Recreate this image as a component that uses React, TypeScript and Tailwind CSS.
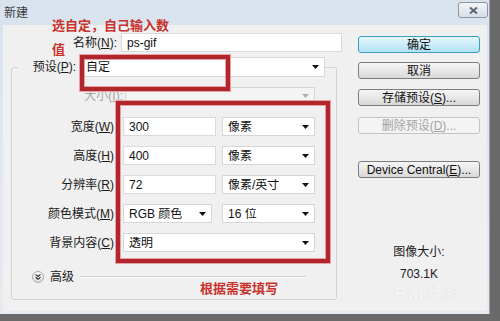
import React from 'react';

const font = { fontFamily: '"Liberation Sans", "Noto Sans CJK SC", sans-serif' };

const Arrow = () => (
  <svg width="7" height="4" viewBox="0 0 7 4" className="shrink-0">
    <path d="M0 0h7L3.5 4z" fill="#111" />
  </svg>
);

type SelectProps = { value?: string; className: string; disabled?: boolean };

const Select = ({ value = '', className, disabled }: SelectProps) => (
  <div
    className={`flex items-center justify-between pl-[5px] pr-[5px] border border-[#d6d6d6] ${
      disabled ? 'bg-[#f4f4f4] text-[#9a9a9a]' : 'bg-white text-[#111]'
    } ${className}`}
  >
    <span className="text-[12px] leading-none truncate">{value}</span>
    <span className={disabled ? 'opacity-30' : ''}>
      <Arrow />
    </span>
  </div>
);

const Input = ({ value, className }: { value: string; className: string }) => (
  <div className={`flex items-center pl-[5px] bg-white border border-[#dadada] text-[12px] leading-none text-[#111] ${className}`}>
    {value}
  </div>
);

const Label = ({ text, mn, className }: { text: string; mn: string; className: string }) => (
  <span className={`text-[12px] leading-none text-right whitespace-nowrap text-[#1a1a1a] ${className}`}>
    {text}(<u>{mn}</u>)
  </span>
);

type BtnProps = { children: React.ReactNode; className?: string; primary?: boolean; disabled?: boolean };

const Button = ({ children, className = '', primary, disabled }: BtnProps) => (
  <div
    className={`w-[122px] h-[17px] flex items-center justify-center rounded-[3px] border text-[12px] leading-none ${
      primary
        ? 'border-[#3d9fc0] bg-gradient-to-b from-[#e6f7fd] to-[#b0e1f3] text-[#111]'
        : disabled
        ? 'border-[#c2c4c6] bg-[#f4f4f4] text-[#a3a3a3]'
        : 'border-[#7d7d7d] bg-gradient-to-b from-[#f6f6f6] to-[#d9d9d9] text-[#111]'
    } ${className}`}
  >
    {children}
  </div>
);

export default function App() {
  return (
    <div className="relative w-[500px] h-[321px] overflow-hidden bg-[#6a6a6a]" style={font}>
      <div className="w-[490px] h-[314px] flex flex-col bg-gradient-to-b from-[#d9e3ee] to-[#e6ebf1] border-r border-[#9aa3ad]">
        {/* title bar */}
        <div className="h-[25px] flex items-center justify-between pl-[4px] pr-[1px]">
          <span className="text-[12px] leading-none text-[#3a3a3a]">新建</span>
          <div className="w-[30px] h-[16px] -mt-[5px] flex items-center justify-center rounded-[3px] border border-[#8d96a1] bg-gradient-to-b from-[#f3f5f8] to-[#d8dee6]">
            <svg width="9" height="7" viewBox="0 0 9 7">
              <path d="M1 0.5L8 6.5M8 0.5L1 6.5" stroke="#5b6674" strokeWidth="2" />
            </svg>
          </div>
        </div>

        {/* body */}
        <div className="flex-1 ml-[3px] mr-[2px] mb-[3px] bg-[#f0f0f0] flex pt-[8px]">
          {/* left column */}
          <div className="w-[339px] pl-[8px] flex flex-col">
            <div className="flex items-center h-[19px]">
              <span className="w-[110px] pr-[4px] text-right text-[12px] leading-none text-[#1a1a1a]">
                名称(<u>N</u>):
              </span>
              <Input value="ps-gif" className="w-[221px] h-[19px]" />
            </div>

            <fieldset className="mt-[5px] w-[326px] border border-[#cfd3d6] rounded-[3px] pb-[16px]">
              <legend className="ml-[6px]">
                <div className="flex items-center h-[20px]">
                  <span className="w-[58px] text-right text-[12px] leading-none text-[#1a1a1a]">
                    预设(<u>P</u>):
                  </span>
                  <Select value="自定" className="ml-[4px] w-[245px] h-[20px]" />
                </div>
              </legend>

              <div className="mt-[10px] flex items-center h-[17px]">
                <span className="w-[111px] text-right text-[12px] leading-none text-[#a5a5a5]">
                  大小(<u>I</u>):
                </span>
                <Select disabled className="ml-[2px] w-[190px] h-[17px]" />
              </div>

              <div className="mt-[13px] flex items-center h-[19px]">
                <Label text="宽度" mn="W" className="w-[103px] pr-[1px]" />
                <Input value="300" className="ml-[8px] w-[93px] h-[19px]" />
                <Select value="像素" className="ml-[6px] w-[93px] h-[19px]" />
              </div>

              <div className="mt-[10px] flex items-center h-[19px]">
                <Label text="高度" mn="H" className="w-[103px] pr-[1px]" />
                <Input value="400" className="ml-[8px] w-[93px] h-[19px]" />
                <Select value="像素" className="ml-[6px] w-[93px] h-[19px]" />
              </div>

              <div className="mt-[10px] flex items-center h-[19px]">
                <Label text="分辨率" mn="R" className="w-[103px] pr-[1px]" />
                <Input value="72" className="ml-[8px] w-[93px] h-[19px]" />
                <Select value="像素/英寸" className="ml-[6px] w-[93px] h-[19px]" />
              </div>

              <div className="mt-[10px] flex items-center h-[19px]">
                <Label text="颜色模式" mn="M" className="w-[103px] pr-[1px]" />
                <Select value="RGB 颜色" className="ml-[8px] w-[89px] h-[19px]" />
                <Select value="16 位" className="ml-[10px] w-[93px] h-[19px]" />
              </div>

              <div className="mt-[10px] flex items-center h-[19px]">
                <Label text="背景内容" mn="C" className="w-[103px] pr-[1px]" />
                <Select value="透明" className="ml-[8px] w-[192px] h-[19px]" />
              </div>

              <div className="mt-[19px] flex items-center h-[12px]">
                <div className="ml-[20px] w-[12px] h-[12px] rounded-full border border-[#a9a9a9] bg-gradient-to-b from-white to-[#dedede] flex items-center justify-center">
                  <svg width="6" height="6" viewBox="0 0 6 6">
                    <path d="M0.5 0.5L3 2.5L5.5 0.5M0.5 3.2L3 5.2L5.5 3.2" stroke="#333" strokeWidth="1.1" fill="none" />
                  </svg>
                </div>
                <span className="ml-[6px] text-[12px] leading-none text-[#1a1a1a]">高级</span>
                <div className="ml-[6px] w-[226px] h-[2px] border-t border-[#cdcdcd] border-b border-b-white" />
              </div>
            </fieldset>
          </div>

          {/* right column */}
          <div className="pl-[16px] flex flex-col">
            <Button primary className="mt-[3px]">确定</Button>
            <Button className="mt-[9px]">取消</Button>
            <Button className="mt-[10px]">存储预设(<u>S</u>)...</Button>
            <Button disabled className="mt-[11px]">删除预设(<u>D</u>)...</Button>
            <Button className="mt-[27px]">Device Central(<u>E</u>)...</Button>
            <div className="mt-[66px] w-[122px] text-center text-[12px] leading-[16px] text-[#1a1a1a]">图像大小:</div>
            <div className="mt-[6px] w-[122px] text-center text-[12px] leading-[16px] text-[#1a1a1a]">703.1K</div>
          </div>
        </div>
      </div>

      {/* annotations laid over the dialog */}
      <div className="absolute left-[52px] top-[17px] text-[13px] leading-[18px] font-bold text-[#c8312c]">
        选自定，自己输入数
      </div>
      <div className="absolute left-[52px] top-[41px] text-[13px] leading-[18px] font-bold text-[#c8312c]">值</div>
      <div className="absolute left-[200px] top-[280px] text-[13px] leading-[18px] font-bold text-[#c8312c]">
        根据需要填写
      </div>
      <div className="absolute left-[80px] top-[55px] w-[150px] h-[36px] border-[4px] border-[#b3252c] shadow-[0_0_0_1px_#e5a2a4,inset_0_0_0_1px_#e5a2a4]" />
      <div className="absolute left-[116px] top-[101px] w-[214px] h-[162px] border-[4px] border-[#b3252c] shadow-[0_0_0_1px_#e5a2a4,inset_0_0_0_1px_#e5a2a4]" />

      {/* faint watermark */}
      <div className="absolute left-[394px] top-[284px] flex items-center gap-[4px] text-[19px] leading-none font-bold text-[#f6f6f6] [text-shadow:0_0_1px_#cdcdcd] opacity-70">
        <span>Bai</span>
        <span className="text-[16px]">经验</span>
      </div>
    </div>
  );
}
